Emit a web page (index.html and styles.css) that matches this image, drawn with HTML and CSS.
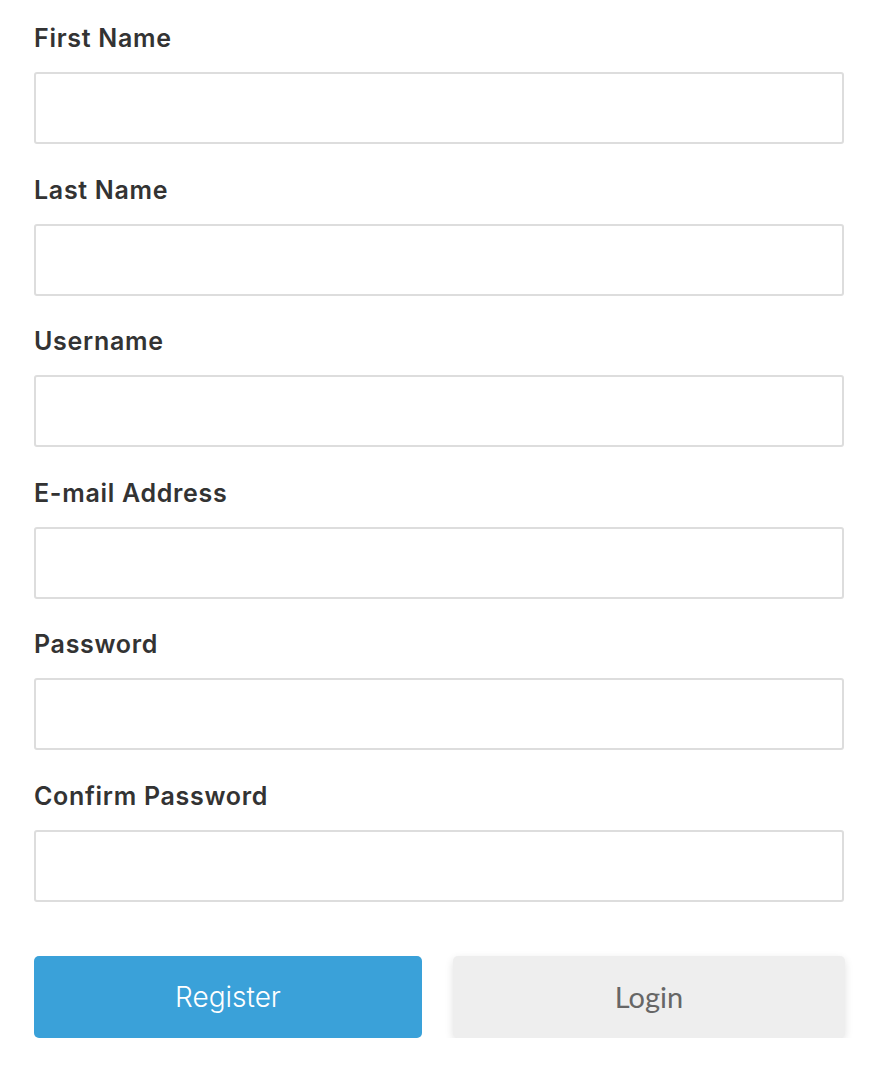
FILE: index.html
```html
<!DOCTYPE html>
<html lang="en">
<head>
    <meta charset="UTF-8">
    <meta name="viewport" content="width=device-width, initial-scale=1.0">
    <title>Register</title>
    <link rel="stylesheet" href="styles.css">
</head>
<body>
    <form class="register-form">
        <div class="field">
            <label for="first-name">First Name</label>
            <input type="text" id="first-name">
        </div>
        <div class="field">
            <label for="last-name">Last Name</label>
            <input type="text" id="last-name">
        </div>
        <div class="field">
            <label for="username">Username</label>
            <input type="text" id="username">
        </div>
        <div class="field">
            <label for="email">E-mail Address</label>
            <input type="email" id="email">
        </div>
        <div class="field">
            <label for="password">Password</label>
            <input type="password" id="password">
        </div>
        <div class="field">
            <label for="confirm-password">Confirm Password</label>
            <input type="password" id="confirm-password">
        </div>
        <div class="actions">
            <button type="submit" class="btn btn-register">Register</button>
            <button type="button" class="btn btn-login">Login</button>
        </div>
    </form>
</body>
</html>
```

FILE: styles.css
```css
body {
    margin: 0;
    background-color: #fff;
    color: #333;
    font-family: "Inter", "Liberation Sans", sans-serif;
}

.register-form {
    width: 810px;
    padding: 23px 0 0 34px;
}

.field {
    display: flex;
    flex-direction: column;
    margin-bottom: 30.6px;
}

.field label {
    font-size: 25px;
    font-weight: 600;
    letter-spacing: 0.7px;
    line-height: 30px;
    margin-bottom: 19px;
    color: #333;
}

.field input {
    box-sizing: border-box;
    height: 72px;
    width: 100%;
    border: 2px solid #ddd;
    border-radius: 3px;
    font-size: 20px;
    padding: 0 16px;
}

.actions {
    display: grid;
    grid-template-columns: 388px 392px;
    column-gap: 31px;
    margin-top: 54px;
}

.btn {
    height: 82px;
    border: none;
    border-radius: 5px;
    cursor: pointer;
}

.btn-register {
    background-color: #3aa1d9;
    color: #fff;
    font-family: "Inter", sans-serif;
    font-weight: 300;
    font-size: 28px;
}

.btn-login {
    background-color: #eee;
    color: #666;
    font-family: "Lato", sans-serif;
    font-size: 29px;
    box-shadow: 0 3px 8px rgba(0, 0, 0, 0.12);
}
```
